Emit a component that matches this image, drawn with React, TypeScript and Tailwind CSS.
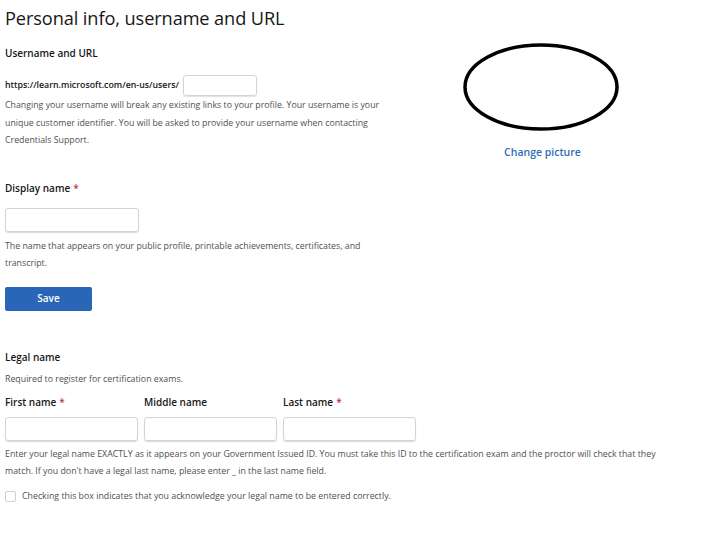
import React from "react";

const font = { fontFamily: '"Open Sans", "Noto Sans", sans-serif' };

function Req() {
  return <span className="text-[#c4314b] ml-[3px]">*</span>;
}

export default function App() {
  return (
    <div className="w-[708px] h-[556px] bg-white text-[#171717] pl-[5px] pt-[4px]" style={font}>
      <h1 className="text-[18.2px] leading-[28px] font-medium tracking-[-0.1px]">Personal info, username and URL</h1>
      <div className="flex">
        <div className="w-[400px]">
          <div className="mt-[13px] text-[10px] font-semibold leading-[16px]">Username and URL</div>
          <div className="mt-[14px] flex items-center gap-[4px] text-[8.8px] font-semibold">
            <span>https://learn.microsoft.com/en-us/users/</span>
            <div className="w-[74px] h-[21px] border border-[#d4d4d4] rounded-[3px] shadow-[0_1px_1px_rgba(0,0,0,0.12)]" />
          </div>
          <p className="mt-[1px] text-[8.8px] leading-[17.5px] text-[#505050] w-[385px]">
            Changing your username will break any existing links to your profile. Your username is your unique customer identifier. You will be asked to provide your username when contacting Credentials Support.
          </p>
          <div className="mt-[30px] text-[10px] font-semibold leading-[16px]">
            Display name<Req />
          </div>
          <div className="mt-[12px] w-[134px] h-[24px] border border-[#d4d4d4] rounded-[3px] shadow-[0_1px_1px_rgba(0,0,0,0.15)]" />
          <p className="mt-[6px] text-[8.8px] leading-[17.5px] text-[#505050] w-[385px]">
            The name that appears on your public profile, printable achievements, certificates, and transcript.
          </p>
          <button className="mt-[14px] w-[87px] h-[24px] bg-[#2a66b8] rounded-[2px] text-white text-[10px] font-semibold">
            Save
          </button>
        </div>
        <div className="flex-1 flex flex-col items-center pt-[9px] pr-[32px]">
          <svg width="160" height="92" viewBox="0 0 160 92">
            <ellipse cx="80" cy="46" rx="76" ry="42" fill="none" stroke="#000" strokeWidth="3.5" />
          </svg>
          <span className="mt-[12px] ml-[4px] text-[10.5px] font-semibold text-[#2f6db5]">Change picture</span>
        </div>
      </div>
      <div className="mt-[38px] text-[10px] font-semibold leading-[16px]">Legal name</div>
      <p className="mt-[7px] text-[8.8px] leading-[14px] text-[#505050]">Required to register for certification exams.</p>
      <div className="mt-[8px] flex gap-[6px]">
        {[
          { l: "First name", r: true },
          { l: "Middle name", r: false },
          { l: "Last name", r: true },
        ].map((f) => (
          <div key={f.l} className="w-[133px]">
            <div className="text-[10px] font-semibold leading-[16px]">
              {f.l}
              {f.r && <Req />}
            </div>
            <div className="mt-[7px] w-[133px] h-[24px] border border-[#d4d4d4] rounded-[3px] shadow-[0_1px_1px_rgba(0,0,0,0.15)]" />
          </div>
        ))}
      </div>
      <p className="mt-[5px] text-[8.8px] leading-[17.5px] text-[#505050] w-[670px]">
        Enter your legal name EXACTLY as it appears on your Government Issued ID. You must take this ID to the certification exam and the proctor will check that they match. If you don't have a legal last name, please enter _ in the last name field.
      </p>
      <label className="mt-[9px] flex items-center gap-[6px] text-[8.8px] text-[#505050]">
        <span className="w-[11px] h-[11px] border border-[#d0d0d0] rounded-[2px] bg-white" />
        Checking this box indicates that you acknowledge your legal name to be entered correctly.
      </label>
    </div>
  );
}
